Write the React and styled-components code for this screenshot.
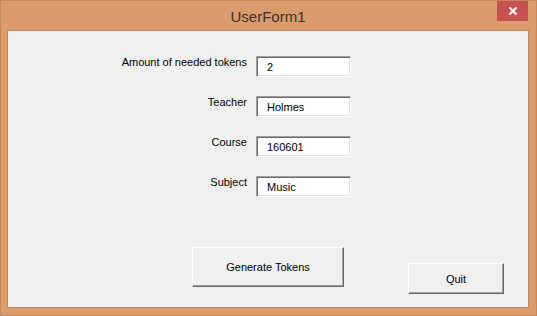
import React, { useState } from 'react';
import styled, { createGlobalStyle } from 'styled-components';

const GlobalStyle = createGlobalStyle`
  html, body {
    margin: 0;
    padding: 0;
    background: #dc9b6d;
  }
  * {
    box-sizing: border-box;
  }
`

const fields = [
  { label: 'Amount of needed tokens', value: '2' },
  { label: 'Teacher', value: 'Holmes' },
  { label: 'Course', value: '160601' },
  { label: 'Subject', value: 'Music' },
];

const App = () => {
  const [values, setValues] = useState(fields.map(f => f.value));

  return (
    <>
      <GlobalStyle />
      <Window>
        <TitleBar>
          <span />
          <Title>UserForm1</Title>
          <CloseButton aria-label="Close">
            <svg width="10" height="10" viewBox="0 0 10 10">
              <path d="M1.5 1.5 L8.5 8.5 M8.5 1.5 L1.5 8.5" stroke="#fff" strokeWidth="2" />
            </svg>
          </CloseButton>
        </TitleBar>
        <Client>
          <Form>
            {fields.map((field, i) => (
              <React.Fragment key={field.label}>
                <Label>{field.label}</Label>
                <TextBox
                  value={values[i]}
                  onChange={e => setValues(v => v.map((x, j) => (j === i ? e.target.value : x)))}
                />
              </React.Fragment>
            ))}
          </Form>
          <Footer>
            <Button width={152} height={40} left={184}>Generate Tokens</Button>
            <Button width={96} height={31} left={64} top={16}>Quit</Button>
          </Footer>
        </Client>
      </Window>
    </>
  )
}

export default App;


const Window = styled.div`
  width: 537px;
  height: 316px;
  display: flex;
  flex-direction: column;
  background: #dc9b6d;
  border: 1px solid #c8885b;
  padding: 0 7px 7px 6px;
`

const TitleBar = styled.div`
  height: 29px;
  display: grid;
  grid-template-columns: 1fr auto 1fr;
  align-items: start;
  margin-right: 1px;
`

const Title = styled.div`
  font-family: "Liberation Sans", Arial, sans-serif;
  font-size: 15px;
  line-height: 15px;
  color: #3a3129;
  padding-top: 8px;
  margin-left: 1px;
`

const CloseButton = styled.div`
  justify-self: end;
  width: 31px;
  height: 20px;
  background: #c75050;
  display: flex;
  align-items: center;
  justify-content: center;
`

const Client = styled.div`
  flex: 1;
  background: #f0f0f0;
  border: 1px solid #c4875c;
  display: flex;
  flex-direction: column;
`

const Form = styled.div`
  display: grid;
  grid-template-columns: 239px 95px;
  grid-auto-rows: 21px;
  column-gap: 9px;
  row-gap: 19px;
  padding-top: 25px;
`

const Label = styled.div`
  font-family: "Liberation Sans", Arial, sans-serif;
  font-size: 11px;
  line-height: 13px;
  color: #000;
  text-align: right;
`

const TextBox = styled.input`
  width: 95px;
  height: 21px;
  margin: 0;
  padding: 0 0 0 10px;
  background: #fff;
  border-style: solid;
  border-width: 1px;
  border-color: #a0a0a0 #fff #fff #a0a0a0;
  box-shadow: inset 1px 1px #696969, inset -1px -1px #e3e3e3;
  font-family: "Liberation Sans", Arial, sans-serif;
  font-size: 11px;
  color: #000;
  outline: none;
`

const Footer = styled.div`
  display: flex;
  align-items: flex-start;
  margin-top: 50px;
`

const Button = styled.button`
  width: ${props => props.width}px;
  height: ${props => props.height}px;
  margin: ${props => props.top || 0}px 0 0 ${props => props.left}px;
  padding: 0;
  background: #f0f0f0;
  border: 1px solid;
  border-color: #fff #696969 #696969 #fff;
  box-shadow: inset -1px -1px #a0a0a0;
  font-family: "Liberation Sans", Arial, sans-serif;
  font-size: 11px;
  color: #000;
`
